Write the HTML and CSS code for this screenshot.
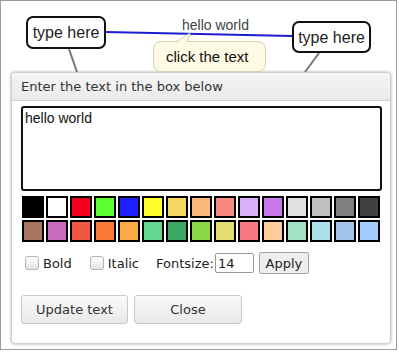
FILE: index.html
```html
<!DOCTYPE html>
<html>
<head lang="en">
    <meta charset="UTF-8">
    <title>Edit text</title>
    <link rel="stylesheet" href="styles.css">
</head>
<body>
<div id="stage">
    <!-- diagram behind the dialog -->
    <div class="canvas">
        <svg class="links" width="395" height="71">
            <line x1="105" y1="31" x2="291" y2="35" stroke="#1c1cd2" stroke-width="2"/>
            <line x1="68" y1="48" x2="76" y2="71" stroke="#777" stroke-width="2"/>
            <line x1="318" y1="52" x2="304" y2="71" stroke="#777" stroke-width="2"/>
        </svg>
        <div class="node node-a">type here</div>
        <div class="node node-b">type here</div>
        <div class="link-label">hello world</div>
        <div class="tip">
            <svg class="tail" width="1" height="1">
                <path d="M22 1 L36 -9 L33 1 Z" fill="#fefbe4"/>
                <path d="M22 0 L36 -9 L33 0" fill="none" stroke="#d3d0ad" stroke-width="1"/>
            </svg>
            click the text
        </div>
    </div>

    <div class="dialog">
        <div class="dialog-title">Enter the text in the box below</div>
        <div class="dialog-body">
            <textarea class="text-box" spellcheck="false">hello world</textarea>

            <div class="swatches">
                <span class="swatch" style="background:#000000"></span>
                <span class="swatch" style="background:#ffffff"></span>
                <span class="swatch" style="background:#f0001c"></span>
                <span class="swatch" style="background:#5cff2e"></span>
                <span class="swatch" style="background:#1e1eff"></span>
                <span class="swatch" style="background:#ffff30"></span>
                <span class="swatch" style="background:#f5d65e"></span>
                <span class="swatch" style="background:#f8b87a"></span>
                <span class="swatch" style="background:#f58a7e"></span>
                <span class="swatch" style="background:#d8b0f8"></span>
                <span class="swatch" style="background:#c878e8"></span>
                <span class="swatch" style="background:#e0e0e0"></span>
                <span class="swatch" style="background:#c0c0c0"></span>
                <span class="swatch" style="background:#808080"></span>
                <span class="swatch" style="background:#404040"></span>

                <span class="swatch" style="background:#a87562"></span>
                <span class="swatch" style="background:#c86abe"></span>
                <span class="swatch" style="background:#f05842"></span>
                <span class="swatch" style="background:#f87838"></span>
                <span class="swatch" style="background:#f8aa48"></span>
                <span class="swatch" style="background:#62d894"></span>
                <span class="swatch" style="background:#40a866"></span>
                <span class="swatch" style="background:#88d848"></span>
                <span class="swatch" style="background:#e2de70"></span>
                <span class="swatch" style="background:#f87880"></span>
                <span class="swatch" style="background:#ffcc9c"></span>
                <span class="swatch" style="background:#a0e2c4"></span>
                <span class="swatch" style="background:#aae0e8"></span>
                <span class="swatch" style="background:#a2c4e8"></span>
                <span class="swatch" style="background:#a2ccfe"></span>
            </div>

            <div class="options">
                <label class="opt"><input type="checkbox" class="check">Bold</label>
                <label class="opt opt-italic"><input type="checkbox" class="check">Italic</label>
                <span class="size-label">Fontsize:</span>
                <input type="text" class="size-input" value="14">
                <button class="apply">Apply</button>
            </div>

            <div class="actions">
                <button class="btn">Update text</button>
                <button class="btn btn-close">Close</button>
            </div>
        </div>
    </div>
</div>
</body>
</html>
```
FILE: styles.css
```css
* {
    box-sizing: border-box;
}
body {
    margin: 0;
    background: #fff;
    font-family: "DejaVu Sans", Verdana, sans-serif;
}
#stage {
    width: 397px;
    height: 350px;
    border: 1px solid #9c9c9c;
}

/* diagram */
.canvas {
    position: relative;
    height: 71px;
}
.links {
    position: absolute;
    left: 0;
    top: 0;
}
.node {
    position: absolute;
    height: 33px;
    width: 80px;
    border: 2px solid #111;
    border-radius: 7px;
    background: #fff;
    font-family: "Liberation Sans", Arial, sans-serif;
    font-size: 16px;
    line-height: 29px;
    text-align: center;
    color: #222;
}
.node-a {
    left: 25px;
    top: 15px;
}
.node-b {
    left: 291px;
    top: 20px;
    width: 79px;
    height: 32px;
    line-height: 29px;
}
.link-label {
    position: absolute;
    left: 181px;
    top: 16px;
    font-family: "Liberation Sans", Arial, sans-serif;
    font-size: 14px;
    line-height: 16px;
    color: #444;
}
.tip {
    position: absolute;
    left: 152px;
    top: 40px;
    width: 113px;
    height: 31px;
    padding-left: 12px;
    border: 1px solid #d3d0ad;
    border-radius: 8px;
    background: #fefbe4;
    font-family: "Liberation Sans", Arial, sans-serif;
    font-size: 15px;
    line-height: 29px;
    color: #111;
}
.tail {
    position: absolute;
    left: 0;
    top: 0;
    overflow: visible;
}

/* dialog */
.dialog {
    margin-left: 10px;
    width: 380px;
    height: 272px;
    border: 1px solid #cfcfcf;
    border-radius: 4px;
    background: #fff;
    box-shadow: 0 0 2px 1px rgba(0, 0, 0, 0.18);
}
.dialog-title {
    height: 28px;
    padding-left: 9px;
    border-bottom: 1px solid #d2d2d2;
    border-radius: 3px 3px 0 0;
    background: linear-gradient(#f4f4f4, #ebebeb);
    font-size: 13px;
    line-height: 27px;
    color: #333;
}
.dialog-body {
    padding: 5px 9px 0 9px;
}
.text-box {
    display: block;
    width: 361px;
    height: 85px;
    padding: 2px 2px;
    border: 2px solid #111;
    border-radius: 3px;
    resize: none;
    outline: none;
    font-family: "Liberation Sans", Arial, sans-serif;
    font-size: 14px;
    line-height: 17px;
    color: #111;
}
.swatches {
    display: grid;
    grid-template-columns: repeat(15, 22px);
    grid-auto-rows: 22px;
    gap: 2px;
    margin: 5px 0 0 1px;
}
.swatch {
    border: 2px solid #000;
}
.options {
    display: flex;
    align-items: center;
    height: 22px;
    margin-top: 10px;
    font-size: 13px;
    color: #222;
}
.opt {
    display: flex;
    align-items: center;
    margin-left: 4px;
}
.opt-italic {
    margin-left: 18px;
}
.check {
    -webkit-appearance: none;
    appearance: none;
    width: 14px;
    height: 14px;
    margin: 0 4px 0 0;
    border: 1px solid #b4b4b4;
    border-radius: 3px;
    background: linear-gradient(#fdfdfd, #e4e4e4);
}
.size-label {
    margin-left: 17px;
}
.size-input {
    width: 39px;
    height: 20px;
    margin-left: 1px;
    padding: 0 2px;
    border: 1px solid #999;
    border-radius: 2px;
    font-family: "DejaVu Sans", Verdana, sans-serif;
    font-size: 13px;
    color: #222;
    outline: none;
}
.apply {
    width: 50px;
    height: 22px;
    margin-left: 5px;
    padding: 0;
    border: 1px solid #a4a4a4;
    border-radius: 2px;
    background: #efefef;
    font-family: "DejaVu Sans", Verdana, sans-serif;
    font-size: 13px;
    color: #222;
}
.actions {
    display: flex;
    gap: 6px;
    margin-top: 21px;
}
.btn {
    width: 107px;
    height: 29px;
    padding: 0;
    border: 1px solid #c8c8c8;
    border-radius: 3px;
    background: linear-gradient(#fafafa, #e8e8e8);
    font-family: "DejaVu Sans", Verdana, sans-serif;
    font-size: 13px;
    color: #333;
}
.btn-close {
    width: 108px;
}
```
